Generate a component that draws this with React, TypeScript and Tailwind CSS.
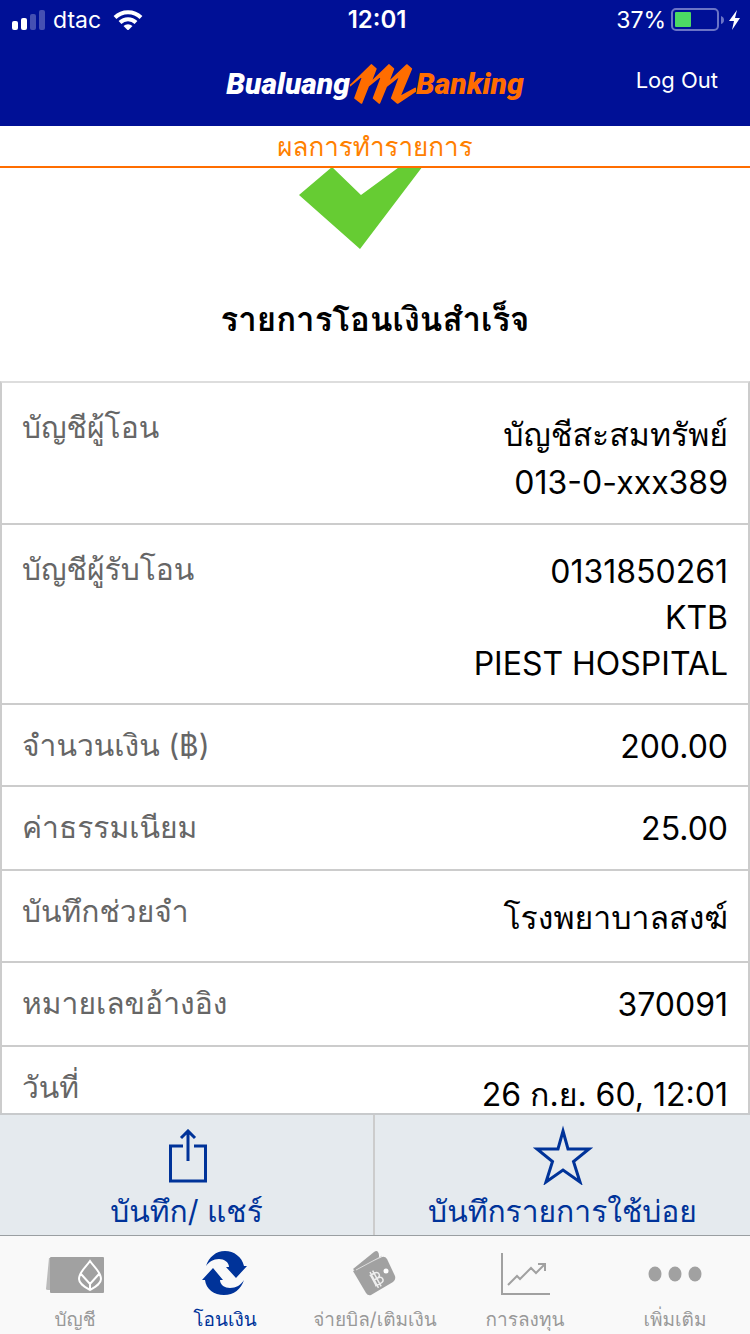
import type { ReactNode } from 'react';

type Detail = {
  label: string;
  lines: string[];
  row: string;
  labelPad: string;
  value: string;
};

const details: Detail[] = [
  { label: 'บัญชีผู้โอน', lines: ['บัญชีสะสมทรัพย์', '013-0-xxx389'], row: 'h-[142px]', labelPad: 'pt-5', value: 'pt-7 leading-12' },
  { label: 'บัญชีผู้รับโอน', lines: ['0131850261', 'KTB', 'PIEST HOSPITAL'], row: 'h-[180px]', labelPad: 'pt-5', value: 'pt-6 leading-[46px]' },
  { label: 'จำนวนเงิน (฿)', lines: ['200.00'], row: 'h-[82px]', labelPad: 'pt-4', value: 'pt-5 leading-11' },
  { label: 'ค่าธรรมเนียม', lines: ['25.00'], row: 'h-[84px]', labelPad: 'pt-4', value: 'pt-5 leading-11' },
  { label: 'บันทึกช่วยจำ', lines: ['โรงพยาบาลสงฆ์'], row: 'h-[92px]', labelPad: 'pt-4', value: 'pt-6 leading-[46px]' },
  { label: 'หมายเลขอ้างอิง', lines: ['370091'], row: 'h-[84px]', labelPad: 'pt-4', value: 'pt-5 leading-11' },
  { label: 'วันที่', lines: ['26 ก.ย. 60, 12:01'], row: 'h-[92px]', labelPad: 'pt-4', value: 'pt-6 leading-12' },
];

const StatusBar = () => (
  <div className="h-10 flex items-center justify-between pl-3 pr-2 text-[23px] leading-10">
    <div className="flex-1 flex items-center gap-2">
      <svg width="33" height="20" viewBox="0 0 33 20" fill="#fff">
        <rect x="0" y="11" width="6" height="9" rx="2" />
        <rect x="9" y="8" width="6" height="12" rx="2" />
        <rect x="18" y="4" width="6" height="16" rx="2" opacity=".27" />
        <rect x="27" y="0" width="6" height="20" rx="2" opacity=".27" />
      </svg>
      <span>dtac</span>
      <svg className="ml-1" width="30" height="20" viewBox="0 0 30 20" fill="none" stroke="#fff" strokeWidth="4">
        <path d="M2 7.500a18.500 18.500 0 0 1 26 0" />
        <path d="M7 12.500a11.500 11.500 0 0 1 16 0" />
        <path d="M10.500 16a6.500 6.500 0 0 1 9 0L15 20.500z" fill="#fff" stroke="none" />
      </svg>
    </div>
    <span className="text-2xl leading-10 font-semibold">12:01</span>
    <div className="flex-1 flex items-center justify-end gap-1">
      <span>37%</span>
      <svg width="54" height="24" viewBox="0 0 54 24">
        <rect x="2" y="1" width="46" height="21" rx="4" fill="none" stroke="#6b74c6" strokeWidth="2" />
        <rect x="5" y="4" width="16" height="15" rx="1" fill="#4cd964" />
        <path d="M51 8q3 1 3 4t-3 4z" fill="#6b74c6" />
      </svg>
      <svg width="14" height="20" viewBox="0 0 14 20" fill="#fff">
        <path d="M9 0L1 11h5L4 20l8-12H7z" />
      </svg>
    </div>
  </div>
);

const Logo = () => (
  <div className="flex items-center text-[30px] leading-10 font-black italic font-[Roboto,sans-serif]">
    <span>Bualuang</span>
    <svg width="66" height="40" viewBox="16 13 202 123" fill="#ff6d00" stroke="#ff6d00" strokeWidth="5" strokeLinejoin="round">
      <path d="M18 78L81 16l14 12-17 44 57-56 14 12-17 44 58-56 14 12-36 86 48-26v9l-54 36-18-15 26-70-43 34-21 51-18-15 27-72-43 34-21 53-20-15 26-72-42 34z" />
    </svg>
    <span className="text-[#ff6d00]">Banking</span>
  </div>
);

const ShareIcon = () => (
  <svg width="40" height="56" viewBox="0 0 40 56" fill="none" stroke="#039" strokeWidth="3">
    <path d="M16 17H3.500v35h35V17H27M21 32V2M14 9l7-7 7 7" />
  </svg>
);

const StarIcon = () => (
  <svg width="64" height="62" viewBox="0 0 64 62" fill="none" stroke="#039" strokeWidth="3">
    <path d="M32 8l5 18h21L42.500 38.500 49 59 32 47 15 59l6.500-20.500L6 26h21z" />
  </svg>
);

const AccountIcon = () => (
  <svg width="60" height="48" viewBox="0 0 60 48">
    <path d="M4 8L1 39q0 1 2 1h6V8z" fill="#bbb" />
    <rect x="5" y="7" width="54" height="36" rx="1" fill="#a1a1a1" />
    <path d="M45 11c-4 6-11 11-11 18 0 5 6 8 11 11 5-3 11-6 11-11 0-7-7-12-11-18zM36 24l9 10 9-10M45 34v6" fill="none" stroke="#fff" strokeWidth="2" />
  </svg>
);

const TransferIcon = () => (
  <svg width="46" height="48" viewBox="0 0 46 48" fill="#039">
    <path d="M4 16C7 7 14 1 23 1c9 0 17 6 19 15h3L34 28 24 17h3c0-5-5-8-10-8-6 0-10 3-13 7z" />
    <path d="M42 30c-3 9-10 15-20 15C12 45 4 39 3 30H0l11-12 10 12h-3c0 5 5 8 10 8 6 0 11-3 14-8z" />
  </svg>
);

const WalletIcon = () => (
  <svg width="46" height="48" viewBox="0 0 46 48">
    <path d="M1 19L22 2q4-3 5 3v3L4 22z" fill="#a1a1a1" />
    <path d="M1 21L30 7q3-1 5 2l8 17q1 4-2 6L19 45q-3 1-5-2L1 21z" fill="#a1a1a1" />
    <path d="M4 20L30 6" stroke="#ddd" />
    <circle cx="34" cy="21" r="2.500" fill="#fff" />
    <g fill="none" stroke="#eee" strokeWidth="1.500" transform="rotate(-28 24 29)">
      <path d="M20 23h5q4 0 4 3t-4 3h-4 5q4 0 4 3t-4 3h-6M21 23v12M22 20v18M25 20v18" />
    </g>
  </svg>
);

const ChartIcon = () => (
  <svg width="50" height="48" viewBox="0 0 50 48" fill="none" stroke="#a1a1a1" strokeWidth="2">
    <path d="M2 3v41h48M8 35l9-9 3 3 11-11 5 5 9-9M38 14h7v7" />
  </svg>
);

const MoreIcon = () => (
  <svg width="54" height="48" viewBox="0 0 54 48" fill="#a1a1a1">
    <ellipse cx="7" cy="24" rx="6.500" ry="7.500" />
    <ellipse cx="27" cy="24" rx="6.500" ry="7.500" />
    <ellipse cx="47" cy="24" rx="6.500" ry="7.500" />
  </svg>
);

const tabs: { label: string; icon: ReactNode; active?: boolean }[] = [
  { label: 'บัญชี', icon: <AccountIcon /> },
  { label: 'โอนเงิน', icon: <TransferIcon />, active: true },
  { label: 'จ่ายบิล/เติมเงิน', icon: <WalletIcon /> },
  { label: 'การลงทุน', icon: <ChartIcon /> },
  { label: 'เพิ่มเติม', icon: <MoreIcon /> },
];

const App = () => {
  return (
    <div className="h-screen flex flex-col bg-white text-black font-[Inter,Loma,sans-serif]">
      <header className="bg-[#001096] text-white">
        <StatusBar />
        <div className="h-[86px] grid grid-cols-[1fr_auto_1fr] items-start">
          <div className="col-start-2 pt-6">
            <Logo />
          </div>
          <button type="button" className="justify-self-end mr-8 pt-5 text-[22px] leading-10">Log Out</button>
        </div>
      </header>

      <h1 className="h-[42px] shrink-0 border-b-2 border-[#ff6d00] text-center text-[26px] leading-[42px] text-[#ff8000]">ผลการทำรายการ</h1>

      <main className="flex-1 min-h-0 overflow-hidden">
        <svg className="mx-auto block" width="152" height="81" viewBox="0 0 152 81" fill="#6c3">
          <path d="M0 27L33-1l29 28 90-66L61 81z" />
        </svg>
        <h2 className="pt-[46px] pb-[38px] text-center text-[33px] leading-12 font-semibold">รายการโอนเงินสำเร็จ</h2>

        <table className="w-full border-separate border-spacing-0 border-x-2 border-t-2 border-x-[#ccc] border-t-[#ddd] text-[32px]">
          <tbody>
            {details.map((item) => (
              <tr key={item.label} className={item.row}>
                <th scope="row" className={`pl-5 text-left align-top font-normal text-[30px] leading-12 text-[#666] border-b-2 border-[#ccc] whitespace-nowrap ${item.labelPad}`}>
                  {item.label}
                </th>
                <td className={`pr-5 text-right align-top border-b-2 border-[#ccc] whitespace-nowrap ${item.value}`}>
                  {item.lines.map((line) => (
                    <div key={line}>{line}</div>
                  ))}
                </td>
              </tr>
            ))}
          </tbody>
        </table>
      </main>

      <div className="h-[122px] shrink-0 grid grid-cols-2 bg-[#e5eaee] border-t-2 border-[#c8cacc] text-[#039] text-[30px] leading-[52px]">
        <button type="button" className="flex flex-col items-center pt-[14px] border-r-2 border-[#ccc]">
          <ShareIcon />
          <span>บันทึก/ แชร์</span>
        </button>
        <button type="button" className="flex flex-col items-center pt-2">
          <StarIcon />
          <span>บันทึกรายการใช้บ่อย</span>
        </button>
      </div>

      <nav className="h-[99px] shrink-0 grid grid-cols-5 bg-[#f9f9f9] border-t border-[#9a9fa2]">
        {tabs.map((tab) => (
          <button
            key={tab.label}
            type="button"
            className={`flex flex-col items-center pt-[14px] text-[19px] leading-11 whitespace-nowrap ${tab.active ? 'text-[#039]' : 'text-[#999]'}`}
          >
            {tab.icon}
            <span>{tab.label}</span>
          </button>
        ))}
      </nav>
    </div>
  );
};

export default App;
